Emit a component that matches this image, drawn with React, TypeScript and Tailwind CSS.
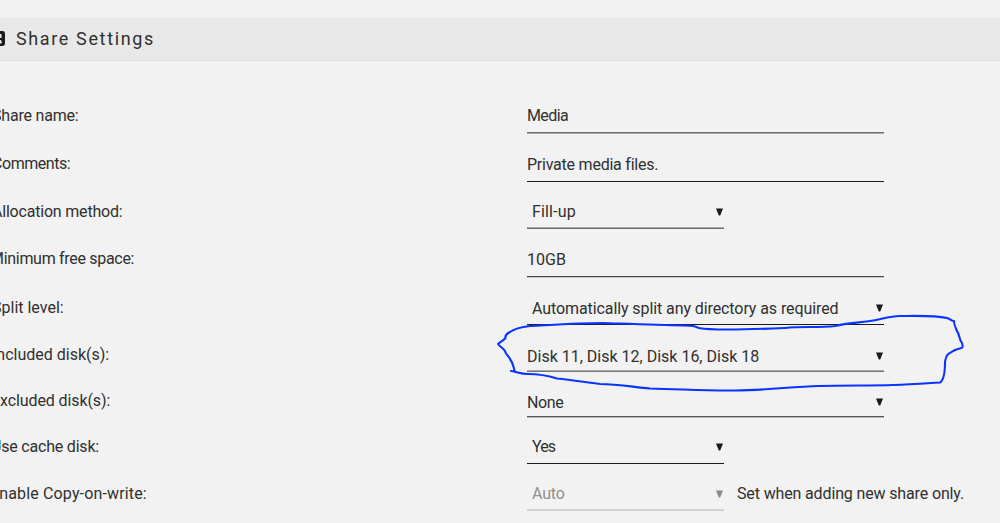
import React from "react";

type Row = {
  label: string;
  labelClass: string;
  value: string;
  valueClass: string;
  height: string;
  width: string;
  line: string;
  arrow?: string;
  select?: boolean;
  muted?: boolean;
  note?: string;
};

const rows: Row[] = [
  { label: "Share name:", labelClass: "pt-[2px] tracking-[-0.2px]", value: "Media", valueClass: "pt-[2px] tracking-[-0.6px]", height: "h-[48px]", width: "w-[357px]", line: "border-[#6e6e6e] shadow-[0_1px_0_#a8a8a8]" },
  { label: "Comments:", labelClass: "pt-px tracking-[-0.45px]", value: "Private media files.", valueClass: "pt-[2px] tracking-[-0.23px]", height: "h-[49px]", width: "w-[357px]", line: "border-[#1c1b1b]" },
  { label: "Allocation method:", labelClass: "pt-[3px] tracking-[-0.2px]", value: "Fill-up", valueClass: "pt-[2px] tracking-[0.15px]", height: "h-[47px]", width: "w-[197px]", line: "border-[#6e6e6e] shadow-[inset_0_-1px_0_#a8a8a8]", select: true, arrow: "mt-[2px]" },
  { label: "Minimum free space:", labelClass: "-ml-[2px] pt-px tracking-[-0.3px]", value: "10GB", valueClass: "pt-[2px]", height: "h-[48px]", width: "w-[357px]", line: "border-[#4a4a4a] shadow-[0_1px_0_#c8c8c8]" },
  { label: "Split level:", labelClass: "pt-[2px]", value: "Automatically split any directory as required", valueClass: "pt-[3px] tracking-[-0.09px]", height: "h-[48px]", width: "w-[357px]", line: "border-[#1c1b1b]", select: true, arrow: "mt-[2px]" },
  { label: "Included disk(s):", labelClass: "pt-[3px]", value: "Disk 11, Disk 12, Disk 16, Disk 18", valueClass: "pt-[6px]", height: "h-[47px]", width: "w-[357px]", line: "border-[#777777] shadow-[inset_0_-1px_0_#a8a8a8]", arrow: "mt-[4px]" },
  { label: "Excluded disk(s):", labelClass: "-ml-px pt-[4px] tracking-[-0.1px]", value: "None", valueClass: "pt-[7px] tracking-[-0.4px]", height: "h-[45px]", width: "w-[357px]", line: "border-[#555555] shadow-[0_1px_0_#bcbcbc]", arrow: "mt-[5px]" },
  { label: "Use cache disk:", labelClass: "-ml-px pt-[2px] tracking-[-0.2px]", value: "Yes", valueClass: "pt-[2px] tracking-[-0.9px]", height: "h-[47px]", width: "w-[197px]", line: "border-[#1c1b1b]", select: true, arrow: "mt-px" },
  { label: "Enable Copy-on-write:", labelClass: "-ml-[2px] pt-[2px] tracking-[0.15px]", value: "Auto", valueClass: "pt-[2px] tracking-[-0.2px]", height: "h-[47px]", width: "w-[197px]", line: "border-[#cfcfcf] shadow-[inset_0_-1px_0_#d6d6d6]", select: true, arrow: "mt-[2px]", muted: true, note: "Set when adding new share only." },
];

function Arrow({ muted, className }: { muted?: boolean; className: string }) {
  return (
    <svg className={"mr-[1px] h-[8px] w-[7px] " + (muted ? "fill-[#8a8a8a] " : "fill-[#1c1b1b] ") + className} viewBox="0 0 7 8">
      <path d="M0 0.500H7L4.200 7.500H2.800Z" />
    </svg>
  );
}

export default function App() {
  return (
    <main className="relative h-[523px] w-[1000px] overflow-hidden bg-[#f2f2f2] pt-[18px] font-['Roboto','Liberation_Sans',sans-serif] text-[16px] text-[#30302f]">
      <header className="flex h-[43px] items-center border-b border-[#dedede] bg-[#e8e8e8]">
        <svg className="mb-[2px] h-[15px] w-[5px]" viewBox="0 0 5 15">
          <path d="M0 0H2.500Q5 0 5 3V12Q5 15 2.500 15H0V12.500H1.500Q2.500 10.500 0.800 9H0V7H1.500V3H0Z" fill="#1c1b1b" />
        </svg>
        <h1 className="ml-[11px] whitespace-nowrap pb-[2px] text-[18px] tracking-[1.63px]">Share Settings</h1>
      </header>
      <div className="pt-[24px]">
        {rows.map((r) => (
          <div key={r.label} className={"flex items-end " + r.height}>
            <div className="-ml-[8px] flex h-[37px] w-[535px] shrink-0 items-center whitespace-nowrap">
              <span className={r.labelClass}>{r.label}</span>
            </div>
            <div className={"flex h-[35px] shrink-0 items-center justify-between whitespace-nowrap border-b " + r.width + " " + r.line + (r.select ? " pl-[5px]" : "") + (r.muted ? " text-[#8f8f8f]" : "")}>
              <span className={r.valueClass}>{r.value}</span>
              {r.arrow && <Arrow muted={r.muted} className={r.arrow} />}
            </div>
            {r.note && <span className="ml-[13px] flex h-[35px] items-center whitespace-nowrap pt-px tracking-[-0.14px]">{r.note}</span>}
          </div>
        ))}
      </div>
      <svg className="pointer-events-none absolute left-0 top-0 h-[523px] w-[1000px]" viewBox="0 0 1000 523" fill="none" stroke="#0a34ff" strokeWidth="2.100" strokeLinecap="round" strokeLinejoin="round">
        <path d="M511 371C518 372 520 374 528 374C538 374 549 376 557 378.500C572 380 584 382 600 384C618 384 633 387 650 388.500C680 389 705 391 735 390.500C767 390 790 387 819 386C850 385 882 386 905 384.500C918 384 930 383 940 382.500C944 380 945 372 945 362C946 354 948 354 955 350C961 347 964 350 962 343C959 340 960 335 957 331C954 324 954 324 954 321C951 321 951 319 947 318C934 315 912 316 900 316C890 316 882 319 870 321C856 323 847 323 835 326C819 328 801 326 785 328C761 329 714 331 699 328C691 325 696 326 683 325.500C658 325 632 324 603 323C578 323 550 325 530 326C522 327 514 329 510 332C506 334 505 336 505.500 338C502 342 500 342 498 344C500 347 502 347 505 351C505 354 509 356 510 359C513 363 513 366 514.500 370" />
      </svg>
    </main>
  );
}
